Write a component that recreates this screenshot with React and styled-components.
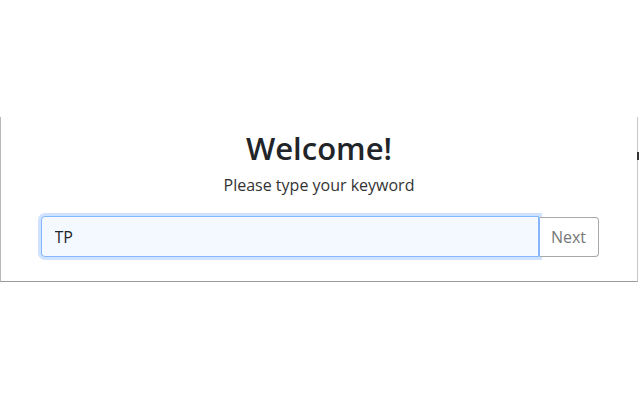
import React, { useEffect, useRef } from "react";
import styled, { createGlobalStyle } from "styled-components";

const Global = createGlobalStyle`
  html, body { margin: 0; padding: 0; background: #fff; }
  body { font-family: "Open Sans", "Noto Sans", sans-serif; color: #212529; }
`;

const Page = styled.div`
  width: 640px;
  height: 400px;
  padding-top: 117px;
  box-sizing: border-box;
`;

const Panel = styled.div`
  position: relative;
  width: 638px;
  height: 165px;
  box-sizing: border-box;
  border-left: 1px solid #b8b8b8;
  border-right: 1px solid #c8c8c8;
  border-bottom: 1px solid #9a9a9a;
  display: flex;
  flex-direction: column;
  align-items: center;
  padding: 8px 0 0;
`;

const Marker = styled.span`
  position: absolute;
  right: -2px;
  top: 35px;
  width: 2px;
  height: 8px;
  background: #333;
`;

const Title = styled.h1`
  margin: 0;
  font-size: 31px;
  font-weight: 600;
  line-height: 46px;
  color: #212529;
`;

const Subtitle = styled.p`
  margin: 3px 0 0;
  font-size: 16px;
  line-height: 22px;
  color: #333;
`;

const Row = styled.div`
  margin-top: 20px;
  display: flex;
  align-items: center;
  width: 558px;
  margin-left: 1px;
`;

const Input = styled.input`
  flex: 1;
  height: 41px;
  box-sizing: border-box;
  border: 1px solid #86b7fe;
  border-radius: 4px 0 0 4px;
  background: #f4f9ff;
  box-shadow: 0 0 0 3px rgba(13, 110, 253, 0.2);
  padding: 0 13px;
  font-family: "Open Sans", "Noto Sans", sans-serif;
  font-size: 16px;
  color: #212529;
  outline: none;
  caret-color: #000;
`;

const Button = styled.button`
  height: 40px;
  width: 60px;
  box-sizing: border-box;
  border: 1px solid #a8a8a8;
  border-left-color: #86b7fe;
  border-radius: 0 4px 4px 0;
  background: #fff;
  font-family: "Open Sans", "Noto Sans", sans-serif;
  font-size: 16px;
  color: #777;
  padding: 0;
`;

export default function App() {
  const ref = useRef(null);
  useEffect(() => {
    if (ref.current) {
      ref.current.focus();
      ref.current.setSelectionRange(2, 2);
    }
  }, []);
  return (
    <Page>
      <Global />
      <Panel>
        <Marker />
        <Title>Welcome!</Title>
        <Subtitle>Please type your keyword</Subtitle>
        <Row>
          <Input ref={ref} defaultValue="TP" />
          <Button>Next</Button>
        </Row>
      </Panel>
    </Page>
  );
}
